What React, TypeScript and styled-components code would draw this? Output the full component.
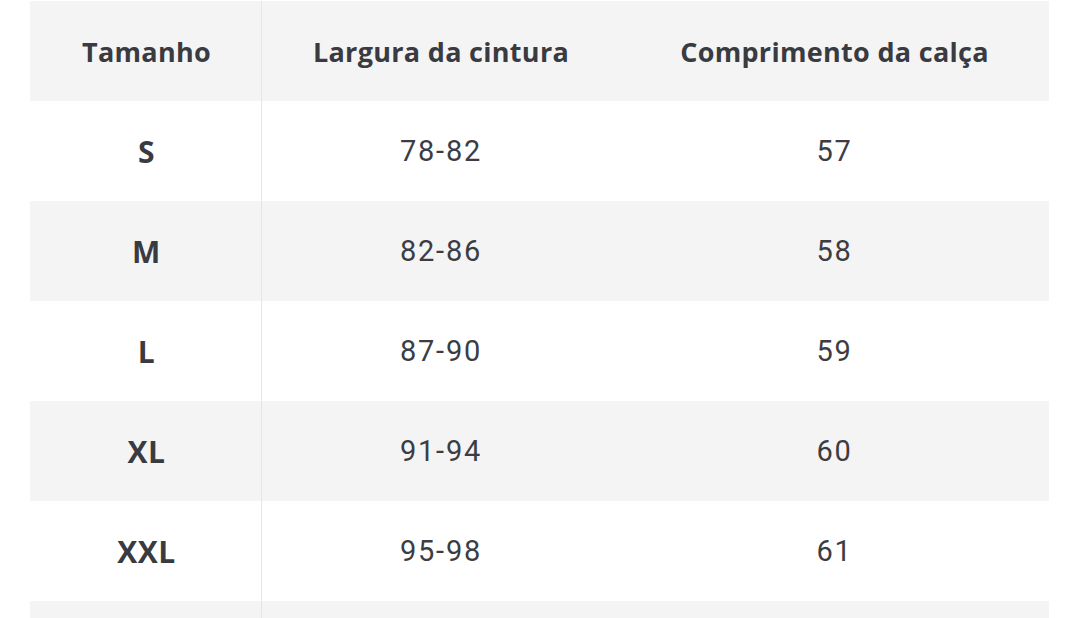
import styled, { createGlobalStyle } from "styled-components";

const GlobalStyle = createGlobalStyle`
  body {
    margin: 0;
    background: #ffffff;
  }
`;

type RowData = {
  size: string;
  waist: string;
  length: string;
};

const rows: RowData[] = [
  { size: "S", waist: "78-82", length: "57" },
  { size: "M", waist: "82-86", length: "58" },
  { size: "L", waist: "87-90", length: "59" },
  { size: "XL", waist: "91-94", length: "60" },
  { size: "XXL", waist: "95-98", length: "61" },
  { size: "", waist: "", length: "" },
];

const App: React.FC = () => {
  return (
    <>
      <GlobalStyle />
      <Page>
        <Table>
          <Row $shaded>
            <SizeCell>
              <HeadText>Tamanho</HeadText>
            </SizeCell>
            <Cell>
              <HeadText>Largura da cintura</HeadText>
            </Cell>
            <Cell>
              <HeadText>Comprimento da calça</HeadText>
            </Cell>
          </Row>
          {rows.map((row, i) => (
            <Row key={i} $shaded={i % 2 === 1}>
              <SizeCell>
                <SizeText>{row.size}</SizeText>
              </SizeCell>
              <Cell>
                <ValueText>{row.waist}</ValueText>
              </Cell>
              <Cell>
                <ValueText>{row.length}</ValueText>
              </Cell>
            </Row>
          ))}
        </Table>
      </Page>
    </>
  );
};

const Page = styled.div`
  height: 618px;
  overflow: hidden;
  padding: 1px 0 0 30px;
  box-sizing: border-box;
`;

const Table = styled.div`
  width: 1019px;
  display: flex;
  flex-direction: column;
`;

const Row = styled.div<{ $shaded?: boolean }>`
  display: grid;
  grid-template-columns: 232px 356px 1fr;
  height: 100px;
  background-color: ${(p) => (p.$shaded ? "#f4f4f5" : "#ffffff")};
`;

const Cell = styled.div`
  display: flex;
  align-items: center;
  justify-content: center;
`;

const SizeCell = styled(Cell)`
  border-right: 1px solid #e6e6e7;
  box-sizing: border-box;
`;

const HeadText = styled.span`
  font-family: "Open Sans", Lato, sans-serif;
  font-weight: 700;
  font-size: 27px;
  letter-spacing: 0.3px;
  color: #393b41;
  padding-left: 2px;
`;

const SizeText = styled(HeadText)`
  font-size: 30px;
  letter-spacing: 0.5px;
`;

const ValueText = styled.span`
  font-family: Roboto, "Noto Sans", sans-serif;
  font-weight: 400;
  font-size: 29px;
  letter-spacing: 1.8px;
  color: #3c3d42;
  padding-left: 2px;
`;

export default App;
